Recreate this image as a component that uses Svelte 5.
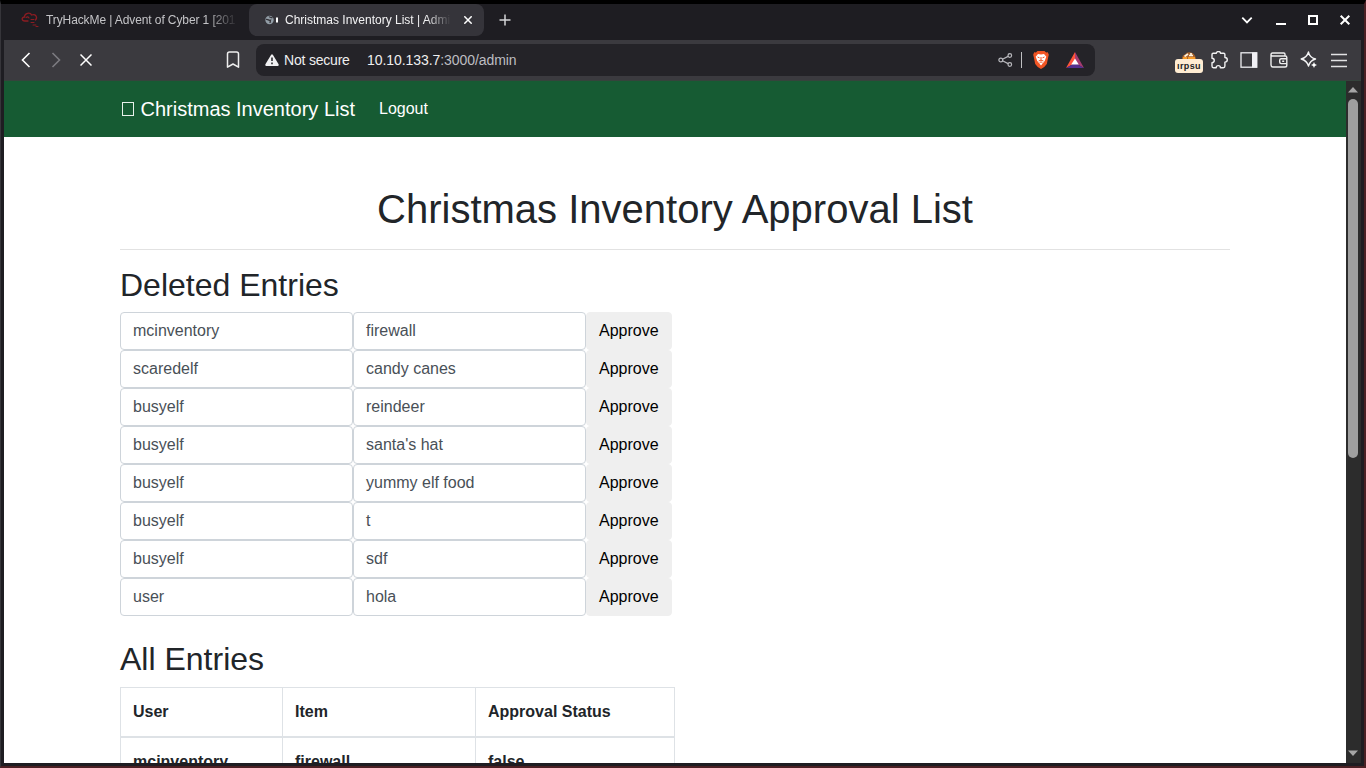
<script>
  const deleted = [
    ['mcinventory', 'firewall'], ['scaredelf', 'candy canes'], ['busyelf', 'reindeer'],
    ['busyelf', "santa's hat"], ['busyelf', 'yummy elf food'], ['busyelf', 't'],
    ['busyelf', 'sdf'], ['user', 'hola']
  ];
</script>

<div class="window">
  <div class="tabs">
    <div class="tab idle">
      <svg width="18" height="16" viewBox="0 0 18 16" fill="none" stroke="#8c1c22" stroke-width="1.3" stroke-linecap="round"><path d="M7 9H4C.3 9 .3 5.200 3.500 5 3.500.500 9.500.300 10.500 3 14.500 1.500 17 5 14.500 8"/><path d="M5 5.500Q7 4 8 6M10 7.500h3M10 10.500h3M12 13h3M15 14.500h2" stroke-width="1.1"/></svg>
      <span class="title">TryHackMe | Advent of Cyber 1 [201</span>
    </div>
    <div class="tab active">
      <svg width="14" height="10" viewBox="0 0 14 10"><circle cx="4.500" cy="5" r="4.200" fill="#929da6"/><path d="M1 4.500C3 3.800 4 6 5.500 5.200L5 8M4 1.500C5 3 6 2 7.500 3" stroke="#35343a" stroke-width="1.300" fill="none"/><path d="M12 2.500v5" stroke="#fff" stroke-width="2"/></svg>
      <span class="title">Christmas Inventory List | Admin</span>
      <svg class="close" width="8" height="8" viewBox="0 0 8 8" stroke="#fff" stroke-width="1.500"><path d="M.3.3l7.400 7.400M7.700.3L.3 7.700"/></svg>
    </div>
    <svg class="plus" width="12" height="12" viewBox="0 0 12 12" stroke="#d5d5d8" stroke-width="1.500"><path d="M6 .5v11M.5 6h11"/></svg>
    <div class="controls">
      <svg width="12" height="12" viewBox="0 0 12 12" fill="none" stroke="#fff" stroke-width="1.800"><path d="M1.300 3.700L6 8.400l4.700-4.700"/></svg>
      <svg width="12" height="12" viewBox="0 0 12 12"><path d="M1 9h10v2H1z" fill="#fff"/></svg>
      <svg width="12" height="12" viewBox="0 0 12 12"><path d="M2 2h8v8H2z" fill="none" stroke="#fff" stroke-width="2"/></svg>
      <svg width="12" height="12" viewBox="0 0 12 12" stroke="#fff" stroke-width="2"><path d="M1.700 1.700l8.600 8.600M10.300 1.700L1.700 10.300"/></svg>
    </div>
  </div>

  <div class="toolbar">
    <svg class="back" width="10" height="16" viewBox="0 0 10 16" fill="none" stroke="#fff" stroke-width="1.600"><path d="M8.500 1L1.500 8l7 7"/></svg>
    <svg class="forward" width="10" height="16" viewBox="0 0 10 16" fill="none" stroke="#7c7b80" stroke-width="1.600"><path d="M1.500 1l7 7-7 7"/></svg>
    <svg class="stop" width="12" height="12" viewBox="0 0 12 12" stroke="#fff" stroke-width="1.500"><path d="M.5.5l11 11M11.500.5l-11 11"/></svg>
    <svg class="bookmark" width="14" height="18" viewBox="0 0 14 18" fill="none" stroke="#eee" stroke-width="1.500" stroke-linejoin="round"><path d="M1.500 3Q1.500 1 3.500 1h7q2 0 2 2v13.200L7 13l-5.500 3.200z"/></svg>
    <div class="address">
      <svg width="14" height="12" viewBox="0 0 14 12"><path d="M6 1Q7-.7 8 1l5.600 9.300Q14 12 12.700 12H1.300Q0 12 .4 10.300z" fill="#f0f0f2"/><path d="M7 3.500V7M7 8.500v1.700" stroke="#29282d" stroke-width="1.600"/></svg>
      <span class="secure">Not secure</span>
      <span class="url">10.10.133.7<i>:3000/admin</i></span>
      <svg class="share" width="15" height="14" viewBox="0 0 15 14" fill="none" stroke="#b9b9be" stroke-width="1.200"><circle cx="2.800" cy="7" r="1.900"/><circle cx="11.800" cy="2.500" r="1.800"/><circle cx="11.800" cy="11.500" r="1.800"/><path d="M4.500 6.200l5.600-2.800M4.500 7.800l5.600 2.800"/></svg>
      <b class="divider"></b>
      <svg class="brave" width="16" height="18" viewBox="0 0 16 18"><path d="M4.500 0h7l1.600 1.500 1.700-.2 1 2.500-.5 2L13.800 13Q12 16 8 18 4 16 2.200 13L.7 5.800l-.5-2 1-2.500 1.700.2z" fill="#f15524"/><path d="M5 3l3 .5L11 3l2.300 2.800-.8 2-.8 2.200-3.700 4.500L4.300 10l-.8-2.200-.8-2z" fill="#fff"/><path d="M4.500 6l2 .8M11.500 6l-2 .8M8 6v3M5.500 10l2.500-.8 2.500.8M6.400 12L8 10.700 9.600 12" stroke="#f15524" fill="none"/></svg>
      <svg width="18" height="16" viewBox="0 0 19 16" preserveAspectRatio="none"><path d="M9.500 0L0 16l9.500-5z" fill="#ff5339"/><path d="M9.500 0L19 16l-9.500-5z" fill="#a33b70"/><path d="M0 16h19l-9.500-5z" fill="#55308f"/><path d="M9.500 6.500l-4 6h8z" fill="#fff"/></svg>
    </div>
    <div class="extensions">
      <div class="extension">
        <svg width="14" height="7" viewBox="0 0 14 7"><path d="M0 7Q0 3 3 2.500 5-.5 9 .5q4 1 5 6.500z" fill="#a9642e"/><path d="M2.500 4.500L6 2M7 3.500h4M9 1v2" stroke="#fff2de" stroke-width="1.700" fill="none"/><path d="M1 6h4M6 6h7" stroke="#f59a2a" stroke-width="1.800"/></svg>
        <div class="badge"><span>ırpsu</span></div>
      </div>
      <svg width="18" height="18" viewBox="0 0 18 18" fill="none" stroke="#f1f1f2" stroke-width="1.400" stroke-linejoin="round"><path d="M2 3.500q0-1.200 1.200-1.200h3.100C6.300-.1 10.500-.1 10.500 2.300h3.200q1.200 0 1.200 1.200v3c3.200 0 3.200 4.600 0 4.600v4q0 1.600-1.500 1.600h-3c0-2.800-4.200-2.800-4.200 0H3.400Q2 16.700 2 15v-3.300c3-.3 3-4.300 0-4.500z"/></svg>
      <svg width="18" height="18" viewBox="0 0 18 18"><rect x="1" y="1.800" width="15.800" height="14.400" fill="none" stroke="#eeeef1" stroke-width="1.300"/><path d="M12 1.500h5v15h-5z" fill="#f1f0f5"/></svg>
      <svg width="18" height="18" viewBox="0 0 18 18" fill="none" stroke="#eee" stroke-width="1.400"><path d="M15 4.800V3.200q0-1.200-1.200-1.200H2.500Q1 2 1 3.500v10.300Q1 16 3 16h12q1.800 0 1.800-1.800V6.500q0-1.500-1.500-1.500H3Q1 5 1 3.500M16.800 7.800h-5.600q-1.500 0-1.500 1.500v1.800q0 1.500 1.500 1.500h5.600M12.200 10.200h2"/></svg>
      <svg width="18" height="18" viewBox="0 0 18 18" fill="none" stroke="#f4f4f5" stroke-width="1.400" stroke-linejoin="round"><path d="M8.500 1Q9.300 6.300 15.500 8 10 9.600 8.500 15 7 9.600 1.200 8 7 6.400 8.500 1z"/><path d="M14 11l.9 2.100 2.100.9-2.100.9L14 17l-.9-2.100-2.100-.9 2.100-.9z" fill="#fff" stroke="none"/></svg>
      <svg width="18" height="18" viewBox="0 0 18 18" stroke="#e2e2e4" stroke-width="1.500"><path d="M1 3.500h16M1 9.500h16M1 15.500h16"/></svg>
    </div>
  </div>

  <div class="viewport">
    <div class="page">
      <nav>
        <span class="brand"><i class="glyph"></i>Christmas Inventory List</span>
        <span class="logout">Logout</span>
      </nav>
      <main>
        <h1>Christmas Inventory Approval List</h1>
        <hr />
        <h2>Deleted Entries</h2>
        {#each deleted as [user, item]}
          <div class="entry">
            <div class="field">{user}</div>
            <div class="field">{item}</div>
            <button>Approve</button>
          </div>
        {/each}
        <h2 class="all">All Entries</h2>
        <table>
          <colgroup><col class="c1" /><col class="c2" /><col class="c3" /></colgroup>
          <thead><tr><th>User</th><th>Item</th><th>Approval Status</th></tr></thead>
          <tbody><tr><th>mcinventory</th><th>firewall</th><th>false</th></tr></tbody>
        </table>
      </main>
    </div>
    <div class="scrollbar">
      <svg width="10" height="6" viewBox="0 0 10 6"><path d="M0 5.500L5 0l5 5.500z" fill="#a5a5a5"/></svg>
      <div class="thumb"></div>
      <svg class="down" width="10" height="6" viewBox="0 0 10 6"><path d="M0 .5h10L5 6z" fill="#a5a5a5"/></svg>
    </div>
  </div>
</div>

<style>
  :global(body) { margin: 0; overflow: hidden; }
  * { box-sizing: border-box; }
  svg { display: block; flex: none; }
  i { font-style: normal; }
  .window { width: 1366px; height: 768px; overflow: hidden; background: #1e1d22; border-top: 4px solid #000; border-left: 1px solid #36353a; border-right: 2px solid #4b2024; border-bottom: 2px solid #4b2024; padding: 0 3px 3px 3px; font-family: "Liberation Sans", Arial, sans-serif; display: flex; flex-direction: column; }
  .tabs { height: 36px; flex: none; display: flex; align-items: center; font-size: 12px; color: #c4c4c7; }
  .tab { height: 32px; display: flex; align-items: center; }
  .idle { width: 245px; padding-left: 17px; gap: 7px; margin-top: -4px; }
  .title { white-space: nowrap; overflow: hidden; line-height: 16px; }
  .idle .title { width: 192px; letter-spacing: -0.1px; mask-image: linear-gradient(90deg, #000 84%, transparent); }
  .active { width: 235px; background: #35343a; border-radius: 8px; padding-left: 16px; color: #f2f2f3; margin-top: -4px; }
  .active .title { width: 166px; margin-left: 6px; mask-image: linear-gradient(90deg, #000 85%, transparent); }
  .close { margin-left: 13px; }
  .plus { margin-left: 15px; margin-top: -4px; }
  .controls { margin-left: auto; margin-right: 10px; margin-top: -4px; display: flex; gap: 20px; }
  .controls svg:first-child { margin-right: 2px; }
  .toolbar { height: 41px; flex: none; background: #3b3a3f; border-bottom: 1px solid #35443c; display: flex; align-items: center; }
  .back { margin-left: 17px; }
  .forward { margin-left: 20px; }
  .stop { margin-left: 19px; }
  .bookmark { margin-left: 134px; }
  .address { margin-left: 16px; width: 839px; height: 32px; border-radius: 8px; background: #242328; display: flex; align-items: center; padding-left: 9px; font-size: 14px; color: #efeff0; white-space: nowrap; }
  .secure { margin-left: 5px; width: 83px; letter-spacing: -0.2px; }
  .url { width: 631px; letter-spacing: -0.07px; }
  .url i { color: #bdbdc1; }
  .divider { width: 1px; height: 16px; background: #c0c0c2; margin: 0 11px 0 8px; }
  .brave { margin-right: 17px; }
  .extensions { margin-left: auto; margin-right: 13px; display: flex; gap: 12px; align-items: center; }
  .extension { width: 28px; height: 22px; display: flex; flex-direction: column; align-items: center; margin: 5px -5px 0 0; }
  .badge { width: 28px; height: 14px; background: #ffecd2; border-radius: 3px; color: #222; font: bold 9px/14px "Liberation Sans", sans-serif; letter-spacing: .35px; display: flex; justify-content: center; flex: none; }
  .viewport { flex: 1; min-height: 0; display: flex; }
  .page { width: 1342px; overflow: hidden; background: #fff; color: #212529; font-size: 16px; line-height: 24px; }
  nav { height: 56px; background: #165b33; color: #fff; display: flex; align-items: center; padding-left: 116px; }
  .brand { width: 259px; font-size: 20px; line-height: 30px; display: flex; align-items: center; white-space: nowrap; }
  .glyph { width: 12px; height: 14px; border: 1px solid #e8f1eb; margin: 0 7px 0 1.500px; }
  main { width: 1110px; margin: 48px 0 0 116px; }
  h1, h2 { font-weight: 400; margin: 0; line-height: 1.2; }
  h1 { font-size: 40px; text-align: center; }
  hr { border: 0; border-top: 1px solid #e2e2e2; margin: 16px 0; }
  h2 { font-size: 32px; margin-bottom: 8px; }
  .entry { display: flex; height: 38px; }
  .field { width: 233px; border: 1px solid #ced4da; border-radius: 4px; padding: 6px 12px; color: #495057; }
  button { border: 1px solid #efefef; background: #efefef; border-radius: 4px; padding: 6px 12px; color: #000; font: 16px/24px "Liberation Sans", Arial, sans-serif; }
  .all { margin-top: 24px; }
  table { width: 554px; table-layout: fixed; border-collapse: collapse; border: 1px solid #dee2e6; }
  .c1 { width: 162px; }
  .c2 { width: 193px; }
  .c3 { width: 199px; }
  th { border: 1px solid #dee2e6; padding: 12px; text-align: left; }
  thead th { border-bottom-width: 2px; }
  .scrollbar { width: 15px; background: #2c2c2c; display: flex; flex-direction: column; align-items: center; padding: 6px 1px 7px 0; }
  .thumb { width: 10px; height: 359px; border-radius: 5px; background: #9f9f9f; margin-top: 5.500px; flex: none; }
  .down { margin-top: auto; }
</style>
